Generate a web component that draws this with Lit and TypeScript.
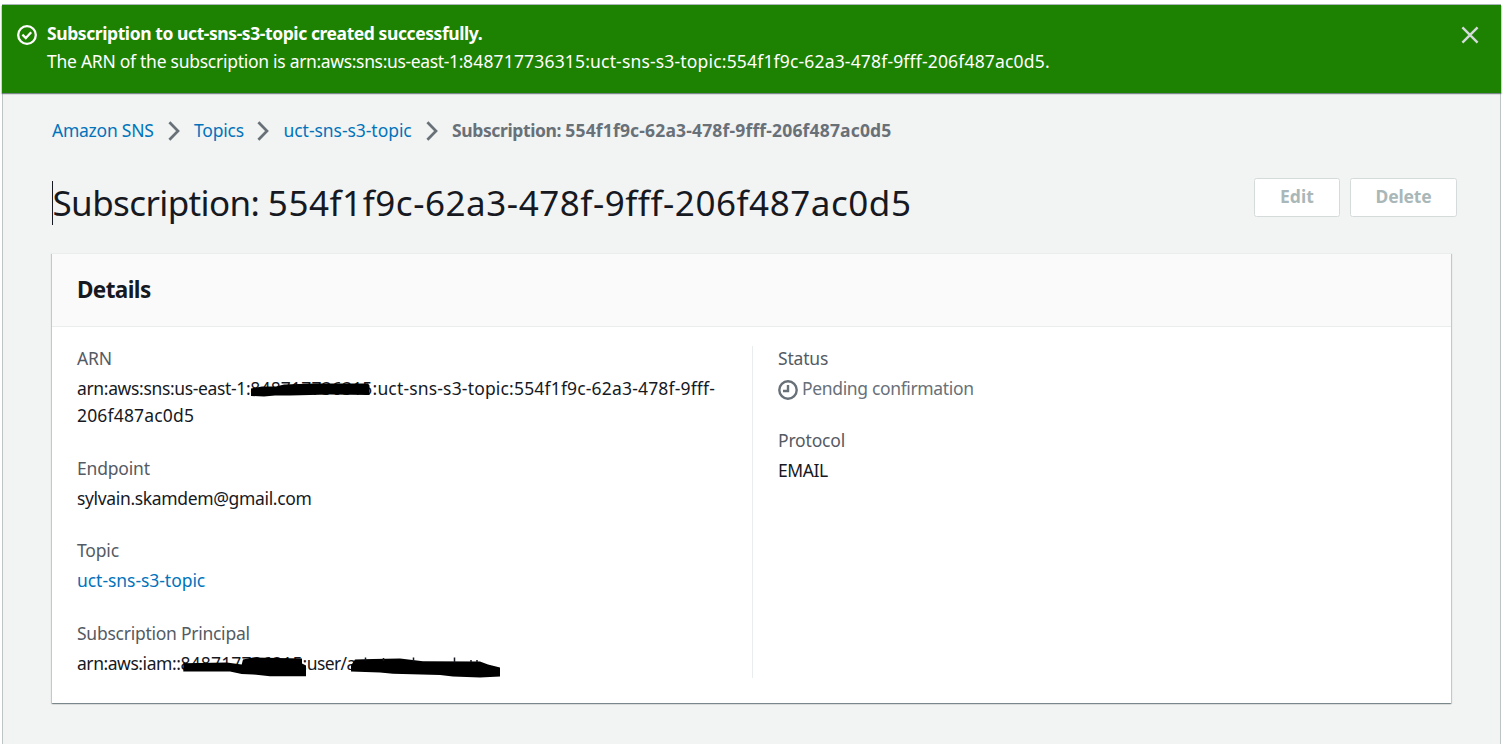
import { LitElement, html, css } from "lit";
import { customElement, property } from "lit/decorators.js";

const ACCOUNT = "848717736315";
const ID_HEAD = "554f1f9c-62a3-478f-9fff-";
const ID_TAIL = "206f487ac0d5";
const TOPIC = "uct-sns-s3-topic";

const base = css`
  :host {
    display: block;
    box-sizing: border-box;
    font-family: "Noto Sans", "Open Sans", sans-serif;
    font-size: 17.5px;
    line-height: 27.5px;
  }
  .num {
    letter-spacing: 0.17px;
  }
  .arn {
    letter-spacing: -0.35px;
  }
`;

@customElement("flash-banner")
export class FlashBanner extends LitElement {
  static styles = [
    base,
    css`
      :host {
        position: relative;
      }
      .banner {
        display: flex;
        align-items: flex-start;
        box-sizing: border-box;
        height: 88px;
        padding: 14.5px 22px 0 15px;
        background: #1d8102;
        color: #fff;
        box-shadow: 0 1px 1px 0 rgba(0, 28, 36, 0.3), 1px 1px 1px 0 rgba(0, 28, 36, 0.15), -1px 1px 1px 0 rgba(0, 28, 36, 0.15);
      }
      .icon {
        width: 20px;
        height: 20px;
        margin: 5.5px 10px 0 0;
        flex: none;
      }
      .text {
        flex: 1;
        white-space: nowrap;
      }
      .title {
        font-weight: 700;
        letter-spacing: -0.42px;
        margin-bottom: 0.6px;
      }
      .lead {
        letter-spacing: -0.27px;
      }
      .close {
        width: 18px;
        height: 18px;
        margin-top: 6.5px;
        flex: none;
      }
    `,
  ];
  render() {
    return html`<div class="banner">
      <svg class="icon" viewBox="0 0 20 20" fill="none" stroke="#fff" stroke-width="2.3">
        <circle cx="10" cy="10" r="8.8" />
        <path d="M5.4 9.6 8.8 13 14.2 7.2" />
      </svg>
      <div class="text">
        <div class="title">Subscription to ${TOPIC} created successfully.</div>
        <div><span class="lead">The ARN of the subscription is </span><span class="arn">arn:aws:sns:us-east-1:</span><span class="num">${ACCOUNT}:${TOPIC}:${ID_HEAD}${ID_TAIL}.</span></div>
      </div>
      <svg class="close" viewBox="0 0 18 18" fill="none" stroke="#d5dbdb" stroke-width="2.4">
        <path d="M1.4 1.4 16.6 16.6M16.6 1.4 1.4 16.6" />
      </svg>
    </div>`;
  }
}

@customElement("crumb-trail")
export class CrumbTrail extends LitElement {
  static styles = [
    base,
    css`
      .trail {
        display: flex;
        align-items: center;
        white-space: nowrap;
      }
      a {
        color: #0073bb;
      }
      .home {
        width: 102px;
        letter-spacing: -0.25px;
      }
      .topics {
        width: 49.5px;
        letter-spacing: -0.2px;
      }
      .topic {
        width: 128.5px;
        letter-spacing: -0.05px;
      }
      svg {
        width: 12px;
        height: 20px;
        margin: 2px 14.5px 0 13.5px;
        flex: none;
      }
      .current {
        color: #687078;
        font-weight: 700;
      }
      .word {
        letter-spacing: -0.38px;
      }
    `,
  ];
  render() {
    const sep = html`<svg viewBox="0 0 12 20" fill="none" stroke="#687078" stroke-width="2.7"><path d="M1.4 1.2 10 10 1.4 18.8" /></svg>`;
    return html`<nav class="trail">
      <a class="home">Amazon SNS</a>${sep}<a class="topics">Topics</a>${sep}<a class="topic">${TOPIC}</a>${sep}
      <span class="current"><span class="word">Subscription: </span><span class="num">${ID_HEAD}${ID_TAIL}</span></span>
    </nav>`;
  }
}

@customElement("detail-field")
export class DetailField extends LitElement {
  @property() label = "";
  @property({ type: Number }) tracking = -0.18;
  static styles = [
    base,
    css`
      .label {
        color: #545b64;
        margin-bottom: 2.5px;
      }
      .value {
        position: relative;
        color: #16191f;
      }
    `,
  ];
  render() {
    return html`<div class="label" style="letter-spacing:${this.tracking}px">${this.label}</div>
      <div class="value"><slot></slot></div>`;
  }
}

@customElement("app-root")
export class AppRoot extends LitElement {
  static styles = [
    base,
    css`
      :host {
        height: 744px;
        padding: 4px 2px 0;
        background: #fff;
        color: #16191f;
        overflow: hidden;
      }
      .frame {
        display: flex;
        flex-direction: column;
        box-sizing: border-box;
        height: 740px;
        border-top: 1px solid #aab7b8;
        width: 1499px;
      }
      .page {
        flex: 1;
        box-sizing: border-box;
        padding: 23.5px 0 0 49px;
        background: #f2f3f3;
        border-left: 1px solid #bcc4c5;
        border-right: 1px solid #bcc4c5;
      }
      .heading {
        display: flex;
        justify-content: space-between;
        align-items: flex-start;
        width: 1405px;
        height: 75px;
        margin-top: 34px;
      }
      .title-wrap {
        display: flex;
      }
      .caret {
        width: 1px;
        height: 44px;
        margin-top: 3px;
        background: #16191f;
      }
      h1 {
        margin: 2.5px 0 0 -0.5px;
        font-size: 35px;
        line-height: 44px;
        font-weight: 400;
        white-space: nowrap;
      }
      .h-word {
        letter-spacing: -0.61px;
      }
      .h-id {
        letter-spacing: 0.54px;
      }
      .actions {
        display: flex;
        gap: 10px;
      }
      button {
        box-sizing: border-box;
        height: 39px;
        padding: 0;
        border: 1px solid #d5dbdb;
        border-radius: 2.5px;
        background: #fff;
        color: #aab7b8;
        font: 700 17.5px/27.5px "Noto Sans", sans-serif;
        padding-bottom: 1px;
      }
      .edit {
        width: 86px;
        letter-spacing: 0.1px;
      }
      .delete {
        width: 107px;
        letter-spacing: -0.15px;
      }
      .card {
        display: flex;
        flex-direction: column;
        width: 1399px;
        height: 450px;
        background: #fff;
        box-shadow: 0 1px 1px 0 rgba(0, 28, 36, 0.3), 1px 1px 1px 0 rgba(0, 28, 36, 0.15), -1px 1px 1px 0 rgba(0, 28, 36, 0.15);
      }
      .card-head {
        box-sizing: border-box;
        height: 74px;
        padding: 21.500px 25px 0;
        background: #fafafa;
        border-top: 1px solid #eaeded;
        border-bottom: 1px solid #eaeded;
      }
      h2 {
        margin: 0;
        font-size: 22.5px;
        line-height: 27.5px;
        font-weight: 700;
        letter-spacing: -0.6px;
      }
      .columns {
        display: grid;
        grid-template-columns: 700px 1fr;
        height: 332px;
        margin-top: 19px;
      }
      .col {
        display: flex;
        flex-direction: column;
        gap: 25px;
        padding-left: 25px;
      }
      .col > :first-child {
        margin-top: -1.5px;
      }
      .col + .col {
        border-left: 1px solid #eaeded;
      }
      .email {
        letter-spacing: -0.35px;
      }
      .link {
        color: #0073bb;
        letter-spacing: -0.05px;
      }
      .iam {
        letter-spacing: -0.45px;
      }
      .user {
        letter-spacing: -0.6px;
      }
      .proto {
        letter-spacing: -0.45px;
      }
      .status {
        display: flex;
        color: #687078;
        letter-spacing: -0.35px;
      }
      .status svg {
        width: 20px;
        height: 20px;
        margin: 5.5px 4px 0 0;
      }
      .mark {
        position: absolute;
        left: 0;
        top: 0;
        width: 440px;
        height: 30px;
        overflow: visible;
      }
    `,
  ];
  render() {
    return html`<div class="frame">
      <flash-banner></flash-banner>
      <main class="page">
        <crumb-trail></crumb-trail>
        <div class="heading">
          <div class="title-wrap">
            <span class="caret"></span>
            <h1><span class="h-word">Subscription: </span><span class="h-id">${ID_HEAD}${ID_TAIL}</span></h1>
          </div>
          <div class="actions">
            <button class="edit" disabled>Edit</button>
            <button class="delete" disabled>Delete</button>
          </div>
        </div>
        <section class="card">
          <div class="card-head"><h2>Details</h2></div>
          <div class="columns">
            <div class="col">
              <detail-field label="ARN" tracking="-0.1">
                <span class="arn">arn:aws:sns:us-east-1:</span><span class="num">${ACCOUNT}:${TOPIC}:${ID_HEAD}<br />${ID_TAIL}</span>
                <svg class="mark" viewBox="77 374.5 440 30">
                  <path d="M251 395.5V388L262 386 276 386 284 384 315 383 368 383 369.5 385V394.5L330 394 290 395 275 395 264 396Z" />
                </svg>
              </detail-field>
              <detail-field label="Endpoint"><span class="email">sylvain.skamdem@gmail.com</span></detail-field>
              <detail-field label="Topic"><a class="link">${TOPIC}</a></detail-field>
              <detail-field label="Subscription Principal" tracking="-0.26">
                <span class="iam">arn:aws:iam::</span><span class="num">${ACCOUNT}</span><span class="user">:user/</span><span>a</span>
                <svg class="mark" viewBox="77 649.5 440 30">
                  <path d="M183.3 662.7 226.7 662 241.7 664 243 659 253 657 302 658V663L306 665V675.7H270L253 674 241.7 673.5 230 671H183.3Z" />
                  <path d="M351 671V665L355 659 373 658.5 400 658 423 660.7 480 661 488 664 500 667V676L480 677 453 676 440 674.5 393 673.3 380 672Z" />
                  <path d="M365.5 657v3M383.5 657.5v3M413.5 657v4M454.5 657v5M470 660.5h2M476 660.5h2" stroke="#16191f" stroke-width="1.5" />
                </svg>
              </detail-field>
            </div>
            <div class="col">
              <detail-field label="Status">
                <div class="status">
                  <svg viewBox="0 0 20 20" fill="none" stroke="#687078" stroke-width="2.4">
                    <circle cx="10" cy="10" r="8.7" />
                    <path d="M10 5V11H5" />
                  </svg>
                  <span>Pending confirmation</span>
                </div>
              </detail-field>
              <detail-field label="Protocol"><span class="proto">EMAIL</span></detail-field>
            </div>
          </div>
        </section>
      </main>
    </div>`;
  }
}
